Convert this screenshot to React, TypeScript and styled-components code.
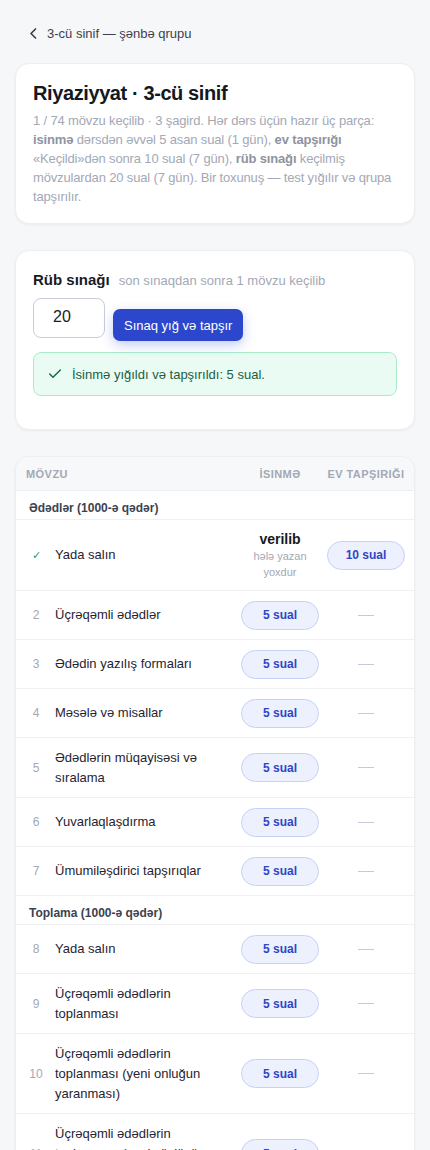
import React from "react";
import styled, { createGlobalStyle } from "styled-components";
import { Check } from "lucide-react";

const Global = createGlobalStyle`
  * { box-sizing: border-box; }
  html, body { margin: 0; padding: 0; background: #f6f7f9; }
  body { font-family: "Liberation Sans", Arial, sans-serif; color: #1f2430; }
`;

const Page = styled.div`
  padding: 23px 15px 40px;
  display: flex;
  flex-direction: column;
`;

const BackLink = styled.a`
  display: flex;
  align-items: center;
  gap: 10px;
  height: 20px;
  padding-left: 14px;
  margin-bottom: 20px;
  font-size: 13px;
  color: #3c4150;
  text-decoration: none;
`;

const Stack = styled.div`
  display: flex;
  flex-direction: column;
  gap: 26px;
`;

const Card = styled.section<{ $pad?: string }>`
  background: #fff;
  border: 1px solid #eceef2;
  border-radius: 14px;
  box-shadow: 0 1px 3px rgba(16, 24, 40, 0.05);
  padding: ${(p) => p.$pad || "17px"};
  overflow: hidden;
`;

const Title = styled.h1`
  margin: 0 0 6px;
  font-size: 20px;
  line-height: 24px;
  font-weight: 700;
  letter-spacing: -0.02em;
  color: #141821;
`;

const Desc = styled.p`
  margin: 0;
  font-size: 13px;
  line-height: 19px;
  letter-spacing: -0.15px;
  color: #a3a8b5;
  b { color: #8d93a0; font-weight: 700; }
`;

const QuizHead = styled.div`
  display: flex;
  align-items: baseline;
  gap: 9px;
  height: 20px;
  line-height: 20px;
  margin-bottom: 8px;
`;

const QuizTitle = styled.h2`
  margin: 0;
  font-size: 15px;
  font-weight: 700;
  color: #171b24;
`;

const Muted = styled.span`
  font-size: 13px;
  color: #a3a8b5;
`;

const Controls = styled.div`
  display: flex;
  align-items: flex-start;
  gap: 8px;
`;

const NumInput = styled.input`
  width: 72px;
  height: 40px;
  border: 1px solid #c9cdd9;
  border-radius: 8px;
  padding: 0 0 2px 19px;
  font-family: "Liberation Sans", Arial, sans-serif;
  font-size: 16px;
  color: #1a1e27;
  background: #fff;
  outline: none;
`;

const PrimaryButton = styled.button`
  margin-top: 11px;
  height: 32px;
  padding: 0 11px;
  border: none;
  border-radius: 7px;
  background: #2c47cb;
  color: #fff;
  font-family: "Liberation Sans", Arial, sans-serif;
  font-size: 13px;
  box-shadow: 0 4px 12px rgba(44, 71, 203, 0.28);
`;

const Success = styled.div`
  margin-top: 11px;
  height: 44px;
  display: flex;
  align-items: center;
  gap: 9px;
  padding: 0 13px;
  background: #e9fbf2;
  border: 1px solid #a9ebc9;
  border-radius: 8px;
  font-size: 13px;
  color: #1c5e3f;
`;

const Grid = `
  display: grid;
  grid-template-columns: 22px 1fr 78px 78px;
  column-gap: 8px;
  padding: 0 9px;
  align-items: center;
`;

const HeadRow = styled.div`
  ${Grid}
  height: 34px;
  background: #f7f8fa;
  border-bottom: 1px solid #eceef2;
  font-size: 11px;
  font-weight: 700;
  letter-spacing: 0.04em;
  color: #a3a8b6;
  text-transform: uppercase;
`;

const HeadCell = styled.div<{ $center?: boolean; $span?: number }>`
  white-space: nowrap;
  text-align: ${(p) => (p.$center ? "center" : "left")};
  grid-column: span ${(p) => p.$span || 1};
`;

const GroupRow = styled.div`
  height: 29px;
  padding: 10px 13px 4px;
  line-height: 14px;
  border-bottom: 1px solid #eef0f3;
  font-size: 12px;
  font-weight: 700;
  color: #3d4250;
`;

const Row = styled.div`
  ${Grid}
  padding-top: 9.5px;
  padding-bottom: 9.5px;
  border-bottom: 1px solid #eef0f3;
`;

const Num = styled.div<{ $done?: boolean }>`
  text-align: center;
  font-size: ${(p) => (p.$done ? "11px" : "12px")};
  color: ${(p) => (p.$done ? "#16a08a" : "#a3a8b5")};
`;

const Topic = styled.div`
  font-size: 13px;
  line-height: 20px;
  color: #1f2430;
`;

const Cell = styled.div`
  display: flex;
  flex-direction: column;
  align-items: center;
  text-align: center;
`;

const Pill = styled.span`
  width: 78px;
  height: 29px;
  display: flex;
  align-items: center;
  justify-content: center;
  border-radius: 15px;
  background: #edf0fd;
  border: 1px solid #c8d1f6;
  color: #2f46c6;
  font-size: 12px;
  font-weight: 700;
`;

const Dash = styled.span`
  width: 16px;
  height: 1px;
  background: #c6c9d6;
`;

const Given = styled.span`
  font-size: 14px;
  line-height: 18px;
  font-weight: 700;
  color: #161a22;
`;

const GivenNote = styled.span`
  font-size: 11px;
  line-height: 16.5px;
  color: #a3a8b5;
`;

type Item = { n: number; title: string };
type Group = { name: string; items: Item[] };

const groups: Group[] = [
  {
    name: "Ədədlər (1000-ə qədər)",
    items: [
      { n: 1, title: "Yada salın" },
      { n: 2, title: "Üçrəqəmli ədədlər" },
      { n: 3, title: "Ədədin yazılış formaları" },
      { n: 4, title: "Məsələ və misallar" },
      { n: 5, title: "Ədədlərin müqayisəsi və sıralama" },
      { n: 6, title: "Yuvarlaqlaşdırma" },
      { n: 7, title: "Ümumiləşdirici tapşırıqlar" },
    ],
  },
  {
    name: "Toplama (1000-ə qədər)",
    items: [
      { n: 8, title: "Yada salın" },
      { n: 9, title: "Üçrəqəmli ədədlərin toplanması" },
      { n: 10, title: "Üçrəqəmli ədədlərin toplanması (yeni onluğun yaranması)" },
      { n: 11, title: "Üçrəqəmli ədədlərin toplanması (yeni yüzlüyün yaranması)" },
      { n: 12, title: "Məsələ və misallar" },
      { n: 13, title: "Ümumiləşdirici tapşırıqlar" },
    ],
  },
];

const Chevron = () => (
  <svg width="8" height="11" viewBox="0 0 8 11" fill="none">
    <polyline points="6.5,1 2,5.5 6.5,10" stroke="#3c4150" strokeWidth="1.7" strokeLinecap="round" strokeLinejoin="round" />
  </svg>
);

export default function App() {
  return (
    <>
      <Global />
      <Page>
        <BackLink href="#">
          <Chevron />
          3-cü sinif — şənbə qrupu
        </BackLink>
        <Stack>
          <Card>
            <Title>Riyaziyyat · 3-cü sinif</Title>
            <Desc>
              1 / 74 mövzu keçilib · 3 şagird. Hər dərs üçün hazır üç parça: <b>isinmə</b> dərsdən
              əvvəl 5 asan sual (1 gün), <b>ev tapşırığı</b> «Keçildi»dən sonra 10 sual (7 gün),{" "}
              <b>rüb sınağı</b> keçilmiş mövzulardan 20 sual (7 gün). Bir toxunuş — test yığılır və
              qrupa tapşırılır.
            </Desc>
          </Card>

          <Card $pad="19px 17px 33px">
            <QuizHead>
              <QuizTitle>Rüb sınağı</QuizTitle>
              <Muted>son sınaqdan sonra 1 mövzu keçilib</Muted>
            </QuizHead>
            <Controls>
              <NumInput defaultValue="20" />
              <PrimaryButton>Sınaq yığ və tapşır</PrimaryButton>
            </Controls>
            <Success>
              <Check size={16} strokeWidth={2.2} color="#1b6b45" />
              İsinmə yığıldı və tapşırıldı: 5 sual.
            </Success>
          </Card>

          <Card $pad="0">
            <HeadRow>
              <HeadCell $span={2} style={{ paddingLeft: 1 }}>Mövzu</HeadCell>
              <HeadCell $center>İsinmə</HeadCell>
              <HeadCell $center>Ev tapşırığı</HeadCell>
            </HeadRow>
            {groups.map((g) => (
              <React.Fragment key={g.name}>
                <GroupRow>{g.name}</GroupRow>
                {g.items.map((it) => {
                  const done = it.n === 1;
                  return (
                    <Row key={it.n}>
                      <Num $done={done}>{done ? "✓" : it.n}</Num>
                      <Topic>{it.title}</Topic>
                      <Cell>
                        {done ? (
                          <>
                            <Given>verilib</Given>
                            <GivenNote>hələ yazan</GivenNote>
                            <GivenNote>yoxdur</GivenNote>
                          </>
                        ) : (
                          <Pill>5 sual</Pill>
                        )}
                      </Cell>
                      <Cell>{done ? <Pill>10 sual</Pill> : <Dash />}</Cell>
                    </Row>
                  );
                })}
              </React.Fragment>
            ))}
          </Card>
        </Stack>
      </Page>
    </>
  );
}
